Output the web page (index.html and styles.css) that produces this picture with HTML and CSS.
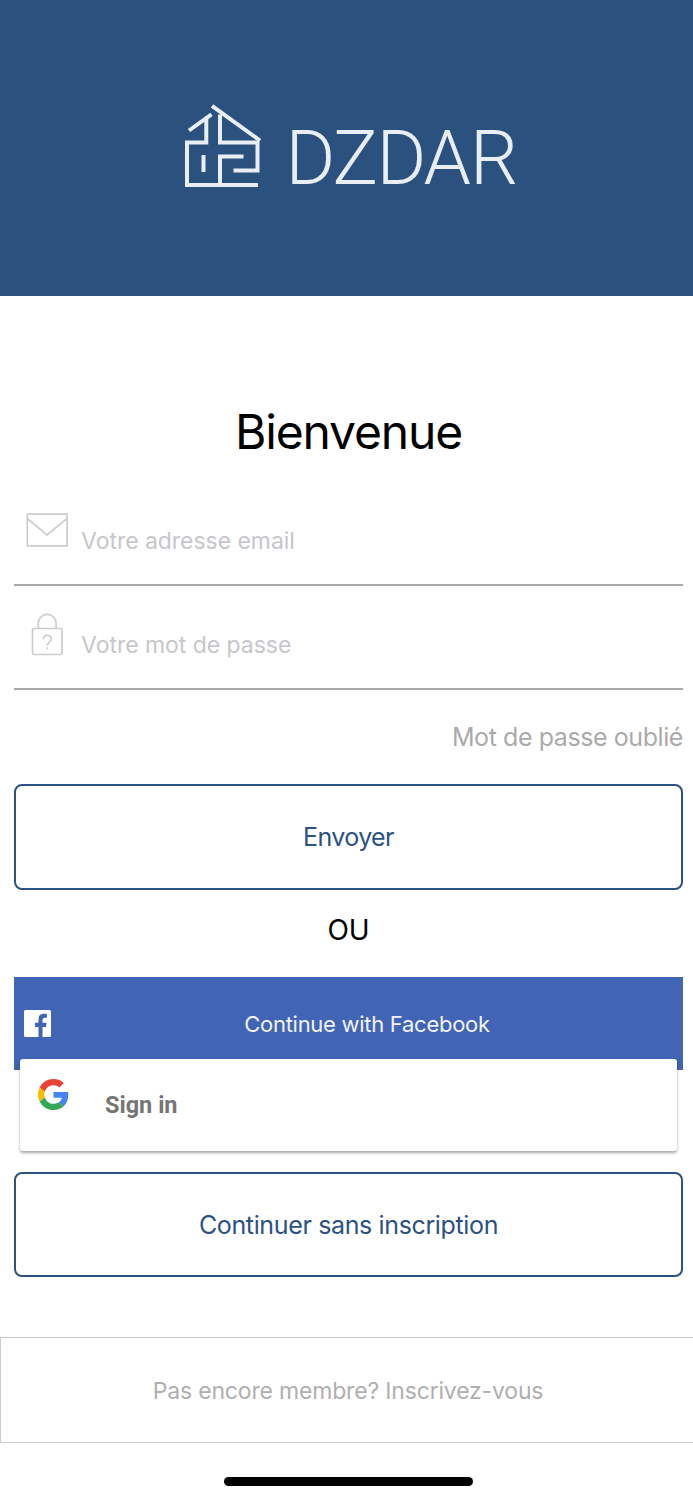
FILE: index.html
```html
<!DOCTYPE html>
<html lang="fr">
<head>
<meta charset="utf-8">
<title>DZDAR</title>
<link rel="stylesheet" href="styles.css">
</head>
<body>
<header class="hero">
  <svg class="logo" width="380" height="130" viewBox="175 85 380 130" role="img" aria-label="DZDAR">
    <g class="logo-mark">
      <path d="M189 130.500L211.500 114.300M212 105.800L260 140.500"/>
      <path d="M206.300 119V142.500H187V185H258"/>
      <path d="M220 114.500V142.500H257.500V170.500H233.500"/>
      <path d="M203.500 155V172M243.500 156.500H220V185"/>
    </g>
    <text class="logo-text" y="183.500" x="285.500 332.500 376.500 423.500 470">DZDAR</text>
  </svg>
</header>
<main class="content">
  <h1 class="title">Bienvenue</h1>
  <div class="field field-email">
    <svg class="icon" width="42" height="42" viewBox="0 0 42 42"><path d="M1.300 4.200H41.100V35.800H1.300ZM1.300 8.500L21 25L41.100 8.500"/></svg>
    <span class="placeholder email-text">Votre adresse email</span>
  </div>
  <div class="field field-password">
    <svg class="icon" width="42" height="46" viewBox="0 0 42 46"><rect x="6.500" y="16.500" width="29.500" height="26" rx="1.500"/><path d="M12.300 16.500V11.300a8.900 8.900 0 0 1 17.800 0V16.500"/><path d="M17.300 27.300c0-5.200 7.900-5.200 7.900-.3c0 3.600-3.900 3.300-3.900 6.700M21.300 35.300v1.900"/></svg>
    <span class="placeholder password-text">Votre mot de passe</span>
  </div>
  <a class="forgot"><span>Mot de passe oublié</span></a>
  <button class="outline-button"><span class="send-text">Envoyer</span></button>
  <div class="separator">OU</div>
  <button class="facebook">
    <svg width="28" height="28" viewBox="0 0 28 28"><path fill="#fff" d="M1.500 0H25.500Q27 0 27 1.500V25.500Q27 27 25.500 27H18.500V17H22L22.600 12.800H18.500V10.500C18.500 8.700 19.200 7.800 21 7.800H22.900V4.100C19 3.500 14.500 3.600 14.500 9.500V12.800H11V17H14.500V27H1.500Q0 27 0 25.500V1.500Q0 0 1.500 0Z"/></svg>
    <span>Continue with Facebook</span>
  </button>
  <button class="google">
    <svg width="31" height="31" viewBox="0 0 48 48"><path fill="#EA4335" d="M24 9.500c3.540 0 6.710 1.220 9.210 3.600l6.850-6.850C35.900 2.380 30.470 0 24 0 14.620 0 6.510 5.380 2.560 13.220l7.980 6.190C12.430 13.720 17.740 9.500 24 9.500z"/><path fill="#4285F4" d="M46.980 24.550c0-1.570-.15-3.090-.38-4.550H24v9.020h12.940c-.58 2.960-2.260 5.480-4.780 7.180l7.730 6c4.510-4.180 7.090-10.360 7.090-17.650z"/><path fill="#FBBC05" d="M10.530 28.590c-.48-1.450-.76-2.990-.76-4.590s.27-3.140.76-4.590l-7.980-6.190C.92 16.460 0 20.120 0 24c0 3.880.92 7.540 2.560 10.780l7.970-6.190z"/><path fill="#34A853" d="M24 48c6.480 0 11.930-2.130 15.890-5.810l-7.730-6c-2.150 1.450-4.920 2.300-8.160 2.300-6.260 0-11.570-4.220-13.470-9.910l-7.980 6.190C6.510 42.620 14.620 48 24 48z"/></svg>
    <span>Sign in</span>
  </button>
  <button class="outline-button guest"><span class="guest-text">Continuer sans inscription</span></button>
</main>
<footer class="register"><span>Pas encore membre? Inscrivez-vous</span></footer>
<div class="home-bar"></div>
</body>
</html>
```
FILE: styles.css
```css
* { box-sizing: border-box; }
body { margin: 0; height: 1500px; overflow: hidden; background: #fff; font-family: Inter, "Liberation Sans", sans-serif; font-size: 24px; line-height: 30px; }
button { margin: 0; padding: 0; font: inherit; display: flex; align-items: center; justify-content: center; }
.hero { height: 296px; padding: 85px 0 0 175px; background: #2b527e; }
.logo { display: block; }
.logo-mark { fill: none; stroke: #e9eef4; stroke-width: 4; }
.logo-text { fill: #e9eef4; font-family: Roboto, sans-serif; font-weight: 300; font-size: 76px; }
.content { display: flex; flex-direction: column; padding: 0 10px 0 14px; }
.title { margin: 106px 0 0; height: 60px; line-height: 60px; font-size: 48px; font-weight: 400; text-align: center; letter-spacing: -1.150px; }
.field { display: flex; align-items: flex-start; border-bottom: 2px solid #aaa; }
.field-email { height: 76px; margin-top: 48px; padding-left: 12px; }
.field-password { height: 104px; padding: 26px 0 0 12px; }
.icon { flex: none; fill: none; stroke: #cdcdcf; stroke-width: 1.700; }
.placeholder { margin: 16px 0 0 13px; color: #c6c6cb; font-size: 23px; letter-spacing: -.04px; }
.password-text { margin-top: 18px; }
.forgot { align-self: flex-end; margin-top: 32px; color: #aaa; font-size: 25px; letter-spacing: -.42px; }
.outline-button { height: 106px; margin-top: 32px; border: 2px solid #2b5282; border-radius: 8px; background: #fff; color: #2b5282; font-size: 25px; letter-spacing: -.36px; }
.send-text { letter-spacing: -.6px; }
.separator { height: 87px; padding-top: 25px; text-align: center; font-size: 28px; }
.facebook { height: 93px; padding: 0 10px; border: 0; background: #4165b4; color: #f0f3fa; font-size: 22px; letter-spacing: -.28px; }
.facebook span { flex: 1; padding-left: 9px; }
.google { position: relative; height: 92px; margin: -11px 6px 0; padding: 0 18px; border: 0; border-radius: 3px; background: #fff; color: #757575; justify-content: flex-start; align-items: flex-start; font: 700 23.500px/30px Roboto, sans-serif; box-shadow: 0 2px 3px rgba(0,0,0,.35); }
.google svg { margin-top: 20px; }
.google span { margin: 31px 0 0 36px; }
.guest { height: 105px; margin-top: 21px; }
.register { height: 106px; margin-top: 60px; border: solid #ccc; border-width: 1px 0 1px 1px; display: flex; align-items: center; justify-content: center; color: #afafaf; font-size: 23px; letter-spacing: -.18px; padding: 1px 0 0 2px; }
.home-bar { width: 249px; height: 9px; margin: 34px 0 0 224px; border-radius: 5px; background: #000; }
```
